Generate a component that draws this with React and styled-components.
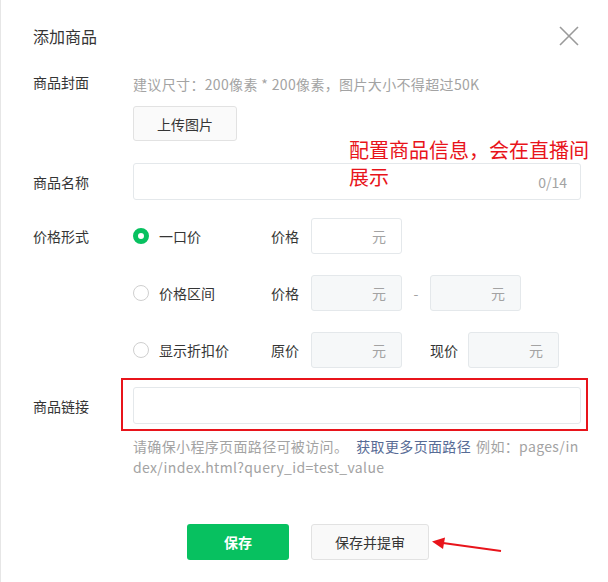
import React from 'react';
import styled, { createGlobalStyle } from 'styled-components';

const GlobalStyle = createGlobalStyle`
  html, body {
    margin: 0;
    padding: 0;
    background: #fff;
  }
  body {
    font-family: "Noto Sans CJK SC", "Noto Sans", sans-serif;
    color: #353535;
  }
`;

function Radio({ checked, children }) {
  return (
    <Option>
      <RadioDot checked={checked} />
      <OptionText>{children}</OptionText>
    </Option>
  );
}

function PriceBox({ disabled }) {
  return (
    <PriceInput disabled={disabled}>
      <Unit>元</Unit>
    </PriceInput>
  );
}

export default function App() {
  return (
    <>
      <GlobalStyle />
      <Dialog>
        <Header>
          <Title>添加商品</Title>
          <Close aria-label="close">
            <svg width="20" height="20" viewBox="0 0 20 20">
              <path d="M1 1 L19 19 M19 1 L1 19" stroke="#9a9a9a" strokeWidth="1.6" fill="none" />
            </svg>
          </Close>
        </Header>

        <Form>
          <Row>
            <Label>商品封面</Label>
            <Field>
              <Hint>建议尺寸：200像素 * 200像素，图片大小不得超过50K</Hint>
              <UploadButton>上传图片</UploadButton>
            </Field>
          </Row>

          <Row $top={22} $center>
            <Label>商品名称</Label>
            <TextInput>
              <Counter>0/14</Counter>
            </TextInput>
          </Row>

          <Row $top={18} $center>
            <Label>价格形式</Label>
            <PriceLine>
              <Radio checked>一口价</Radio>
              <SubLabel>价格</SubLabel>
              <PriceBox />
            </PriceLine>
          </Row>

          <Row $top={21} $center>
            <Label />
            <PriceLine>
              <Radio>价格区间</Radio>
              <SubLabel>价格</SubLabel>
              <PriceBox disabled />
              <Dash>-</Dash>
              <PriceBox disabled />
            </PriceLine>
          </Row>

          <Row $top={21} $center>
            <Label />
            <PriceLine>
              <Radio>显示折扣价</Radio>
              <SubLabel>原价</SubLabel>
              <PriceBox disabled />
              <SubLabel $gap={28} $w={38}>现价</SubLabel>
              <PriceBox disabled />
            </PriceLine>
          </Row>

          <Row $top={19} $center>
            <Label>商品链接</Label>
            <LinkWrap>
              <TextInput />
              <Highlight />
            </LinkWrap>
          </Row>

          <Row $top={12}>
            <Label />
            <LinkHint>
              <span>请确保小程序页面路径可被访问。</span>
              <LinkText>获取更多页面路径</LinkText>
              <span>例如：pages/index/index.html?query_id=test_value</span>
            </LinkHint>
          </Row>
        </Form>

        <Footer>
          <PrimaryButton>保存</PrimaryButton>
          <DefaultButton>
            保存并提审
            <Arrow width="72" height="18" viewBox="0 0 72 18">
              <path d="M70 14 L12 6" stroke="#e8141b" strokeWidth="2" fill="none" />
              <path d="M1 4.5 L14 0.5 L12 12 Z" fill="#e8141b" />
            </Arrow>
          </DefaultButton>
        </Footer>

        <Note>
          配置商品信息，会在直播间
          <br />
          展示
        </Note>
      </Dialog>
    </>
  );
}

const Dialog = styled.div`
  position: relative;
  width: 608px;
  height: 582px;
  box-sizing: border-box;
  padding: 0 27px 0 32px;
  border-left: 1px solid #e6e6e6;
  overflow: hidden;
  background: #fff;
`;

const Header = styled.div`
  display: flex;
  align-items: center;
  justify-content: space-between;
  height: 72px;
`;

const Title = styled.div`
  font-size: 16px;
  color: #353535;
`;

const Close = styled.div`
  display: flex;
  width: 20px;
  height: 20px;
  margin-right: 2px;
`;

const Form = styled.div`
  display: flex;
  flex-direction: column;
`;

const Row = styled.div`
  display: flex;
  align-items: ${p => (p.$center ? 'center' : 'flex-start')};
  margin-top: ${p => p.$top || 0}px;
`;

const Label = styled.div`
  width: 100px;
  flex-shrink: 0;
  font-size: 14px;
  line-height: 20px;
  color: #353535;
`;

const Field = styled.div`
  display: flex;
  flex-direction: column;
  align-items: flex-start;
`;

const Hint = styled.div`
  font-size: 14px;
  line-height: 20px;
  letter-spacing: 0.35px;
  color: #a3a3a3;
  margin-top: 2px;
`;

const UploadButton = styled.div`
  margin-top: 12px;
  width: 104px;
  height: 35px;
  box-sizing: border-box;
  display: flex;
  align-items: center;
  justify-content: center;
  border: 1px solid #e2e2e2;
  border-radius: 3px;
  background: #fafafa;
  font-size: 14px;
  color: #353535;
`;

const TextInput = styled.div`
  flex: 1;
  height: 37px;
  box-sizing: border-box;
  display: flex;
  align-items: center;
  justify-content: flex-end;
  padding: 0 13px;
  border: 1px solid #e4e8eb;
  border-radius: 3px;
  background: #fff;
`;

const Counter = styled.span`
  font-size: 14px;
  color: #a3a3a3;
`;

const PriceLine = styled.div`
  display: flex;
  align-items: center;
`;

const Option = styled.div`
  display: flex;
  align-items: center;
  width: 138px;
`;

const RadioDot = styled.span`
  width: 16px;
  height: 16px;
  box-sizing: border-box;
  border-radius: 50%;
  border: ${p => (p.checked ? '5px solid #07c160' : '1px solid #cfcfcf')};
  background: #fff;
  margin-right: 10px;
`;

const OptionText = styled.span`
  font-size: 14px;
  color: #353535;
`;

const SubLabel = styled.span`
  width: ${p => p.$w || 40}px;
  margin-left: ${p => p.$gap || 0}px;
  font-size: 14px;
  color: #353535;
`;

const PriceInput = styled.div`
  width: 91px;
  height: 36px;
  box-sizing: border-box;
  display: flex;
  align-items: center;
  justify-content: flex-end;
  padding-right: 15px;
  border: 1px solid #e4e8eb;
  border-radius: 3px;
  background: ${p => (p.disabled ? '#f6f8f9' : '#fff')};
`;

const Unit = styled.span`
  font-size: 14px;
  color: #a3a3a3;
`;

const Dash = styled.span`
  width: 28px;
  text-align: center;
  font-size: 14px;
  color: #a3a3a3;
`;

const LinkWrap = styled.div`
  position: relative;
  flex: 1;
  display: flex;
`;

const Highlight = styled.div`
  position: absolute;
  left: -12px;
  right: -7px;
  top: -9px;
  bottom: -7px;
  border: 2px solid #e8141b;
  pointer-events: none;
`;

const LinkHint = styled.div`
  flex: 1;
  font-size: 14px;
  line-height: 21px;
  letter-spacing: 0.35px;
  color: #a3a3a3;
  word-break: break-all;
`;

const LinkText = styled.span`
  color: #576b95;
  margin: 0 5px 0 8px;
`;

const Footer = styled.div`
  display: flex;
  gap: 22px;
  margin-top: 46px;
  padding-left: 154px;
`;

const PrimaryButton = styled.div`
  width: 102px;
  height: 36px;
  display: flex;
  align-items: center;
  justify-content: center;
  border-radius: 3px;
  background: #07c160;
  color: #fff;
  font-size: 14px;
  font-weight: 700;
`;

const DefaultButton = styled.div`
  position: relative;
  width: 118px;
  height: 36px;
  box-sizing: border-box;
  display: flex;
  align-items: center;
  justify-content: center;
  border: 1px solid #e2e2e2;
  border-radius: 3px;
  background: #f9f9f9;
  color: #353535;
  font-size: 14px;
`;

const Arrow = styled.svg`
  position: absolute;
  left: 119px;
  top: 12px;
`;

const Note = styled.div`
  position: absolute;
  left: 348px;
  top: 136px;
  font-size: 20px;
  line-height: 27px;
  color: #e8141b;
  white-space: nowrap;
`;
